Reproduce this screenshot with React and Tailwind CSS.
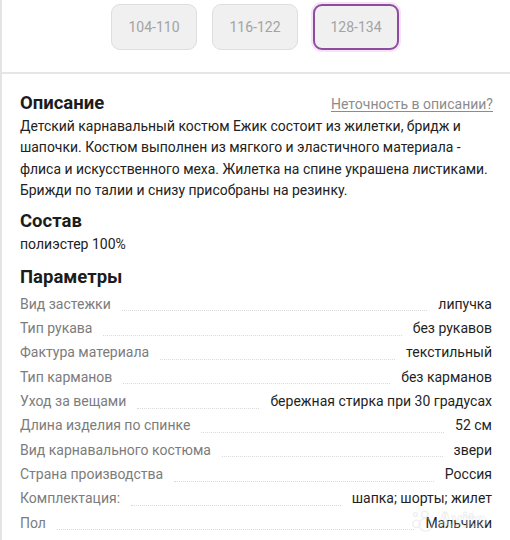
const sizes = [
  { label: "104-110", active: false },
  { label: "116-122", active: false },
  { label: "128-134", active: true },
];

const params = [
  ["Вид застежки", "липучка"],
  ["Тип рукава", "без рукавов"],
  ["Фактура материала", "текстильный"],
  ["Тип карманов", "без карманов"],
  ["Уход за вещами", "бережная стирка при 30 градусах"],
  ["Длина изделия по спинке", "52 см"],
  ["Вид карнавального костюма", "звери"],
  ["Страна производства", "Россия"],
  ["Комплектация:", "шапка; шорты; жилет"],
  ["Пол", "Мальчики"],
];

const App = () => {
  return (
    <div className="relative h-[540px] overflow-hidden bg-white border-l-2 border-[#e4e4e4] font-['Roboto',sans-serif]">
      {/* Size buttons */}
      <div className="flex justify-center gap-[15px] pt-1 pr-[2px]">
        {sizes.map((s) => (
          <div
            key={s.label}
            className={
              s.active
                ? "w-[86px] h-[46px] flex items-center justify-center rounded-[9px] bg-[#f0f0f0] border-2 border-[#8d4d9e] shadow-[0_0_0_2px_#f6e3f7] text-[14px] text-[#a3a3a3]"
                : "w-[86px] h-[46px] flex items-center justify-center rounded-[9px] bg-[#f0f0f0] border border-[#dedede] text-[14px] text-[#a3a3a3]"
            }
          >
            {s.label}
          </div>
        ))}
      </div>

      <div className="mt-[22px] border-t-2 border-[#e6e6e6]" />

      {/* Description */}
      <div className="pl-[18px] pr-[17px] pt-[17px]">
        <div className="flex justify-between items-baseline">
          <h2 className="text-[18.5px] leading-[24px] font-bold text-[#1c1c1c]">Описание</h2>
          <a className="text-[14px] text-[#8c8c8c] underline underline-offset-2">Неточность в описании?</a>
        </div>
        <p className="mt-[1px] text-[13.95px] leading-[21.3px] text-[#222]">
          Детский карнавальный костюм Ежик состоит из жилетки, бридж и шапочки. Костюм выполнен из мягкого и эластичного материала - флиса и искусственного меха. Жилетка на спине украшена листиками. Брижди по талии и снизу присобраны на резинку.
        </p>

        <h2 className="mt-[8px] text-[18.5px] leading-[24px] font-bold text-[#1c1c1c]">Состав</h2>
        <p className="mt-[1px] text-[14px] leading-[21px] text-[#222]">полиэстер 100%</p>

        <h2 className="mt-[10px] text-[18.5px] leading-[24px] font-bold text-[#1c1c1c]">Параметры</h2>
        <div className="mt-[3px] pr-[1px]">
          {params.map(([k, v]) => (
            <div key={k} className="flex items-center h-[24.3px] text-[14px]">
              <span className="text-[#7c7c7c] whitespace-nowrap">{k}</span>
              <div className="flex-1 self-end mb-[5px] mx-[11px] border-b border-dotted border-[#dadada]" />
              <span className="text-[#1f1f1f] whitespace-nowrap">{v}</span>
            </div>
          ))}
        </div>
      </div>

      {/* watermark */}
      <div className="absolute left-[408px] top-[505px] flex items-center gap-1 opacity-40 pointer-events-none">
        <svg width="24" height="24" viewBox="0 0 26 26" fill="none" stroke="#d8d8d8" strokeWidth="1.5">
          <circle cx="17" cy="17" r="7" />
          <circle cx="7" cy="16" r="4" />
          <circle cx="16" cy="6" r="3.5" />
          <circle cx="6" cy="6" r="2" />
        </svg>
        <span className="text-[21px] font-bold text-transparent [-webkit-text-stroke:1px_#d8d8d8]">Avito</span>
      </div>
    </div>
  );
};

export default App;
